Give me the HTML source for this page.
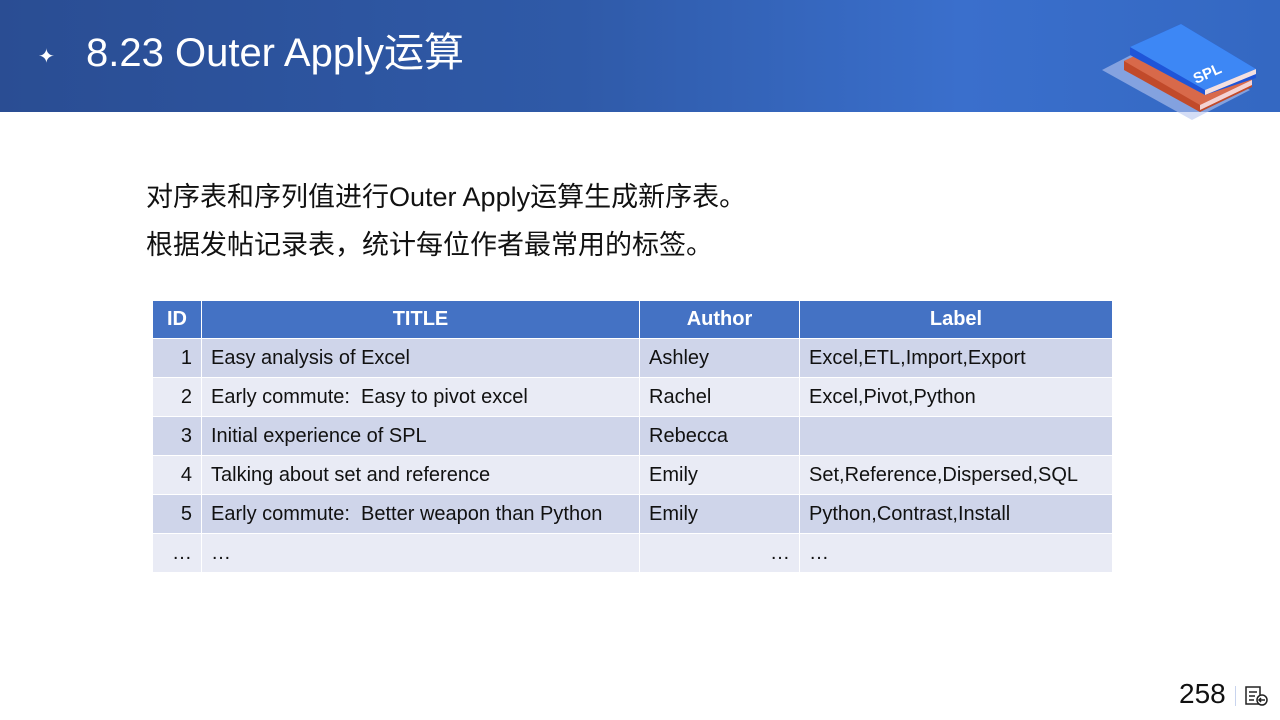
<!DOCTYPE html>
<html><head><meta charset="utf-8"><style>
*{margin:0;padding:0;box-sizing:border-box}
body{width:1280px;height:720px;overflow:hidden;background:#fff;font-family:"Liberation Sans","Noto Sans CJK SC",sans-serif;position:relative}
.hdr{position:absolute;left:0;top:0;width:1280px;height:112px;background:linear-gradient(90deg,#2a4d93 0%,#2f5aa8 45%,#3a6fcc 75%,#3468c2 100%)}
.title{position:absolute;left:86px;top:30px;color:#fff;font-size:40px;line-height:46px;white-space:nowrap}
.star{position:absolute;left:38px;top:44px;color:#fff;font-size:20px}
.txt{position:absolute;left:146px;font-size:27px;line-height:32px;color:#111;white-space:nowrap}
table{position:absolute;left:152px;top:300px;border-collapse:collapse;font-size:20px;color:#111}
td,th{border:1px solid #fff;height:39px;padding:0 9px;white-space:nowrap}
th{background:#4472c4;color:#fff;font-weight:bold;height:38px;text-align:center}
tr.a td{background:#cfd5ea}
tr.b td{background:#e9ebf5}
.r{text-align:right}
.pg{position:absolute;left:1179px;top:678px;font-size:28px;color:#111}
</style></head><body>
<div class="hdr"></div>
<div class="star">✦</div>
<div class="title">8.23 Outer Apply运算</div>
<svg style="position:absolute;left:1100px;top:12px" width="160" height="110" viewBox="0 0 160 110">
<polygon points="2,58 60,28 150,78 92,108" fill="#b7c7f0" opacity="0.6"/>
<polygon points="24,49 75,25 152,68 152,75 100,100 24,58" fill="#c14a2a"/>
<polygon points="24,49 75,25 152,68 100,93 " fill="#d8694a"/>
<polygon points="100,93 152,68 152,73 100,98" fill="#f4d3d3"/>
<polygon points="30,35 81,12 156,57 156,66 105,83 30,43" fill="#1f55d8"/>
<polygon points="30,35 81,12 156,57 105,78" fill="#3d87f5"/>
<polygon points="105,78 156,57 156,62 105,83" fill="#f4e0e0"/>
<text x="96" y="72" fill="#fff" font-size="15" font-weight="bold" transform="rotate(-24 96 72)" font-family="Liberation Sans">SPL</text>
</svg>
<div class="txt" style="top:181px">对序表和序列值进行Outer Apply运算生成新序表。</div>
<div class="txt" style="top:229px">根据发帖记录表，统计每位作者最常用的标签。</div>
<table>
<tr><th style="width:49px">ID</th><th style="width:438px">TITLE</th><th style="width:160px">Author</th><th style="width:313px">Label</th></tr>
<tr class="a"><td class="r">1</td><td>Easy analysis of Excel</td><td>Ashley</td><td>Excel,ETL,Import,Export</td></tr>
<tr class="b"><td class="r">2</td><td>Early commute:&nbsp; Easy to pivot excel</td><td>Rachel</td><td>Excel,Pivot,Python</td></tr>
<tr class="a"><td class="r">3</td><td>Initial experience of SPL</td><td>Rebecca</td><td></td></tr>
<tr class="b"><td class="r">4</td><td>Talking about set and reference</td><td>Emily</td><td>Set,Reference,Dispersed,SQL</td></tr>
<tr class="a"><td class="r">5</td><td>Early commute:&nbsp; Better weapon than Python</td><td>Emily</td><td>Python,Contrast,Install</td></tr>
<tr class="b"><td class="r">…</td><td>…</td><td class="r">…</td><td>…</td></tr>
</table>
<div class="pg">258</div>
<div style="position:absolute;left:1235px;top:686px;width:1px;height:20px;background:#c8d4ee"></div>
<svg style="position:absolute;left:1245px;top:685px" width="24" height="22" viewBox="0 0 24 22" fill="none" stroke="#222" stroke-width="1.5">
<rect x="1" y="2" width="14" height="17"/><line x1="4" y1="7" x2="12" y2="7"/><line x1="4" y1="11" x2="10" y2="11"/><line x1="4" y1="15" x2="9" y2="15"/>
<circle cx="17" cy="15" r="5" fill="#fff"/><path d="M20 15H14M16 13l-2 2 2 2"/>
</svg>
</body></html>
